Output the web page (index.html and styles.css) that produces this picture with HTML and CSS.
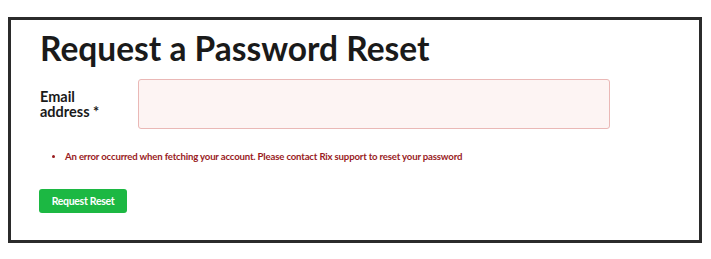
FILE: index.html
```html
<!DOCTYPE html>
<html>
<head>
<meta charset="utf-8">
<link rel="stylesheet" href="styles.css">
</head>
<body>
<div class="frame">
  <h1 class="title">Request a Password Reset</h1>
  <div class="field">
    <label class="label" for="email"><span class="line">Email</span><span class="line">address *</span></label>
    <input class="input" id="email" type="email">
  </div>
  <ul class="errors">
    <li>An error occurred when fetching your account. Please contact Rix support to reset your password</li>
  </ul>
  <button class="btn" type="button">Request Reset</button>
</div>
</body>
</html>
```

FILE: styles.css
```css
html, body {
  margin: 0;
  background: #fff;
}
body {
  padding: 17px 9px 16px 8px;
  font-family: Lato, "Liberation Sans", sans-serif;
}
.frame {
  box-sizing: border-box;
  height: 226px;
  border: 3px solid #2b2b2b;
  padding: 8px 29px 0 29px;
}
.title {
  margin: 0;
  font-size: 33.5px;
  line-height: 40px;
  font-weight: 700;
  color: #1a1a1a;
}
.field {
  display: flex;
  align-items: center;
  margin-top: 11px;
}
.label {
  flex: 0 0 94px;
  margin-right: 4px;
  font-size: 14.5px;
  line-height: 15px;
  font-weight: 700;
  color: #1a1a1a;
}
.line {
  display: block;
}
.input {
  box-sizing: border-box;
  width: 472px;
  height: 50px;
  margin: 0;
  background: #fdf4f3;
  border: 1px solid #eab8b6;
  border-radius: 3px;
}
.errors {
  margin: 22px 0 0 0;
  padding-left: 25px;
  color: #991b1e;
  font-size: 9.6px;
  line-height: 12px;
  font-weight: 700;
  letter-spacing: -0.17px;
}
.btn {
  display: block;
  margin: 26px 0 0 -1px;
  width: 88px;
  height: 24px;
  padding: 0;
  border: 0;
  border-radius: 3px;
  background: #1cb843;
  color: #fff;
  font-family: Lato, "Liberation Sans", sans-serif;
  font-size: 10.5px;
  font-weight: 700;
  letter-spacing: -0.3px;
}
```
